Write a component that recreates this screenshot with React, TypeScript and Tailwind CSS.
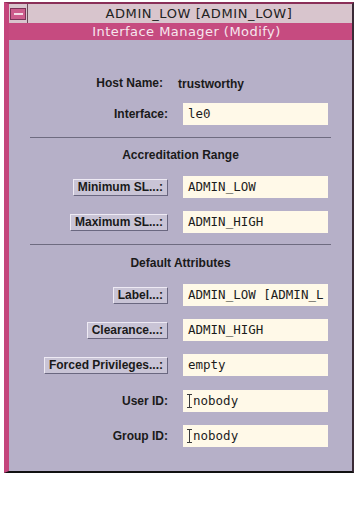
import React from 'react';

const labelFont = { fontFamily: '"Liberation Sans", Arial, sans-serif' };
const monoFont = { fontFamily: '"DejaVu Sans Mono", "Liberation Mono", monospace' };
const titleFont = { fontFamily: '"DejaVu Sans", "Noto Sans", sans-serif' };

const IBeam = () => (
  <svg width="5" height="14" viewBox="0 0 5 14" className="mr-[1px] shrink-0">
    <path d="M0 0.5h5M0 13.5h5M2.5 0.5v13" stroke="#3a3a3a" strokeWidth="1" fill="none" />
  </svg>
);

const Field: React.FC<{ value: string; cursor?: boolean }> = ({ value, cursor }) => (
  <div
    className="ml-[15px] flex h-[22px] w-[145px] items-center overflow-hidden whitespace-nowrap bg-[#fff9e8] pl-[4px] text-[12.5px] text-[#1c1c1c]"
    style={monoFont}
  >
    {cursor && <IBeam />}
    <span className={cursor ? '' : 'pl-[1px]'}>{value}</span>
  </div>
);

const PushButton: React.FC<{ children: React.ReactNode }> = ({ children }) => (
  <button
    className="h-[17px] border border-t-[#eeeaf4] border-l-[#eeeaf4] border-r-[#6a6780] border-b-[#6a6780] bg-[#c9c4d6] px-[4px] text-[12px] font-bold leading-[14px] text-[#1a1a1a]"
    style={labelFont}
  >
    {children}
  </button>
);

const Row: React.FC<{ left: React.ReactNode; value: string; cursor?: boolean; className?: string }> = ({
  left,
  value,
  cursor,
  className = '',
}) => (
  <div className={`flex items-center ${className}`}>
    <div className="flex w-[159px] justify-end">{left}</div>
    <Field value={value} cursor={cursor} />
  </div>
);

const Label: React.FC<{ children: React.ReactNode }> = ({ children }) => (
  <span className="text-[12px] font-bold text-[#1a1a1a]" style={labelFont}>
    {children}
  </span>
);

const Separator: React.FC<{ className?: string }> = ({ className = '' }) => (
  <div className={`ml-[21px] h-[1px] w-[301px] bg-[#6e6b80] ${className}`} />
);

const Heading: React.FC<{ children: React.ReactNode; className?: string }> = ({ children, className = '' }) => (
  <div className={`text-center text-[12px] font-bold leading-[14px] text-[#1a1a1a] ${className}`} style={labelFont}>
    {children}
  </div>
);

export default function App() {
  return (
    <div className="min-h-[530px] w-[356px] bg-white pt-[2px]">
      <div className="ml-[4px] w-[350px] border-t-[2px] border-l-[5px] border-r-[2px] border-b-[2px] border-t-[#8a2f58] border-l-[#c4457c] border-r-[#3a2a36] border-b-[#111]">
        {/* title bar */}
        <div className="flex h-[19px] bg-[#d8c5cd]">
          <div className="flex w-[19px] items-center justify-center border-r border-[#6a4a5a]">
            <div className="flex h-[12px] w-[16px] items-center justify-center border border-[#7a3358] bg-[#cc5c8c]">
              <div className="h-[2px] w-[9px] bg-[#f2dce6]" />
            </div>
          </div>
          <div
            className="flex-1 pl-[18px] text-center text-[13px] leading-[19px] tracking-[0.6px] text-[#222]"
            style={titleFont}
          >
            ADMIN_LOW [ADMIN_LOW]
          </div>
        </div>
        <div
          className="h-[17px] bg-[#c64b80] pl-[12px] text-center text-[13px] leading-[17px] tracking-[0.45px] text-[#f6e6ee]"
          style={titleFont}
        >
          Interface Manager (Modify)
        </div>

        {/* content */}
        <div className="h-[431px] bg-[#b6b0c8] pt-[36px]">
          <div className="flex h-[14px] items-center leading-[14px]">
            <div className="flex w-[154px] justify-end">
              <Label>Host Name:</Label>
            </div>
            <div className="ml-[15px]">
              <Label>trustworthy</Label>
            </div>
          </div>

          <Row className="mt-[13px]" left={<Label>Interface:</Label>} value="le0" />

          <Separator className="mt-[12px]" />
          <Heading className="mt-[10px]">Accreditation Range</Heading>

          <Row className="mt-[14px]" left={<PushButton>Minimum SL...:</PushButton>} value="ADMIN_LOW" />
          <Row className="mt-[13px]" left={<PushButton>Maximum SL...:</PushButton>} value="ADMIN_HIGH" />

          <Separator className="mt-[11px]" />
          <Heading className="mt-[11px]">Default Attributes</Heading>

          <Row className="mt-[14px]" left={<PushButton>Label...:</PushButton>} value="ADMIN_LOW [ADMIN_L" />
          <Row className="mt-[13px]" left={<PushButton>Clearance...:</PushButton>} value="ADMIN_HIGH" />
          <Row className="mt-[13px]" left={<PushButton>Forced Privileges...:</PushButton>} value="empty" />
          <Row className="mt-[14px]" left={<Label>User ID:</Label>} value="nobody" cursor />
          <Row className="mt-[13px]" left={<Label>Group ID:</Label>} value="nobody" cursor />
        </div>
      </div>
    </div>
  );
}
